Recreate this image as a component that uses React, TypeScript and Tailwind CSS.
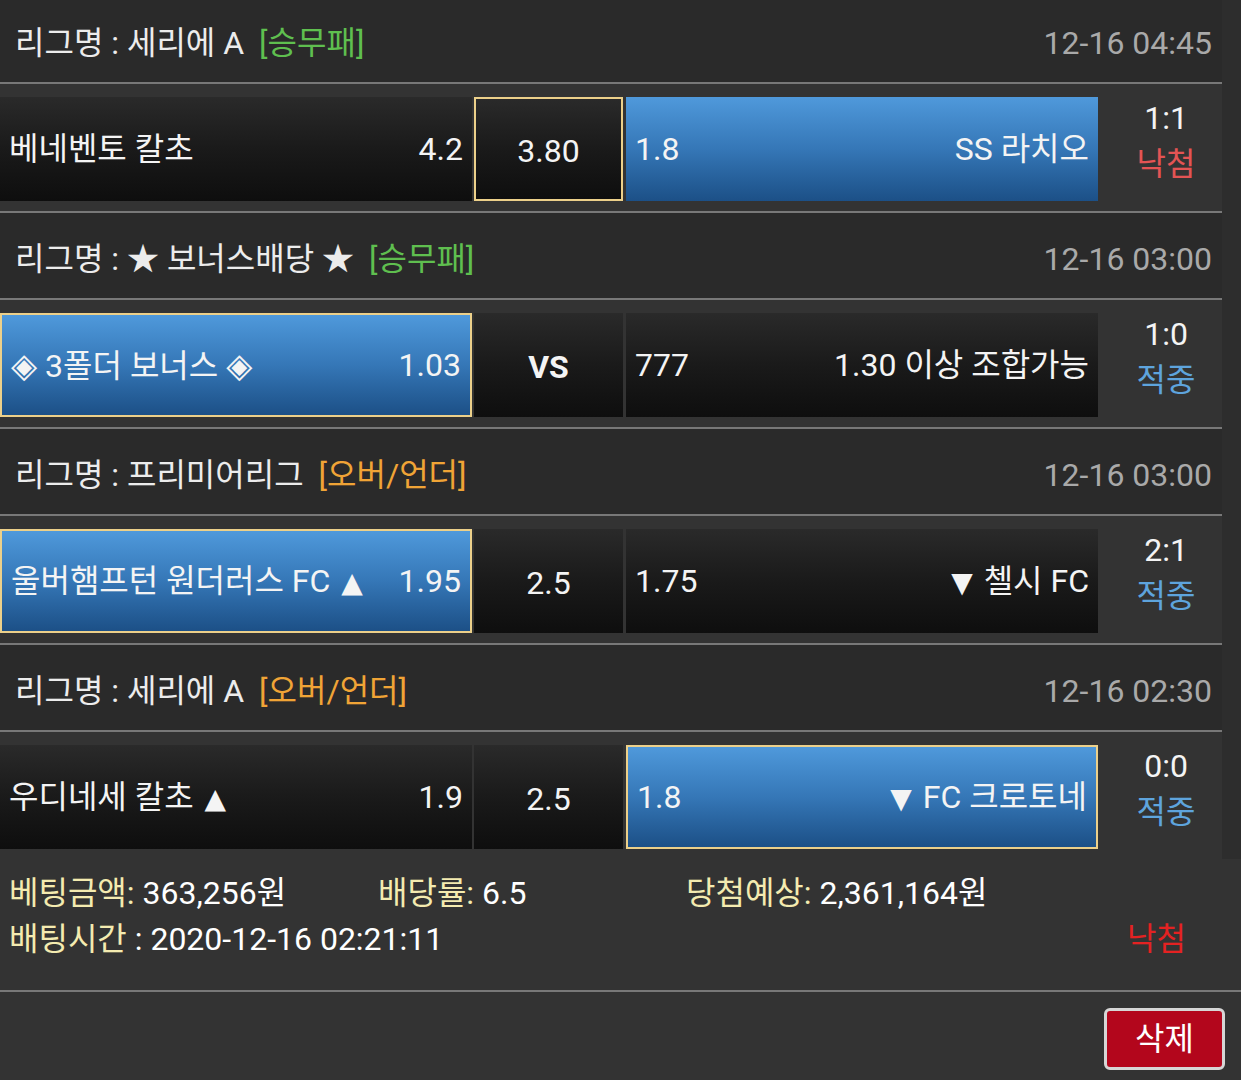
import React from "react";

type Cell = { left: string; right?: string; blue?: boolean; gold?: boolean; bold?: boolean };

type Match = {
    league: string;
    type: string;
    typeColor: "green" | "orange";
    time: string;
    home: Cell;
    mid: Cell;
    away: Cell;
    score: string;
    result: "낙첨" | "적중";
};

const matches: Match[] = [
    {
        league: "세리에 A", type: "승무패", typeColor: "green", time: "12-16 04:45",
        home: { left: "베네벤토 칼초", right: "4.2" },
        mid: { left: "3.80", gold: true },
        away: { left: "1.8", right: "SS 라치오", blue: true },
        score: "1:1", result: "낙첨",
    },
    {
        league: "★ 보너스배당 ★", type: "승무패", typeColor: "green", time: "12-16 03:00",
        home: { left: "◈ 3폴더 보너스 ◈", right: "1.03", blue: true, gold: true },
        mid: { left: "VS", bold: true },
        away: { left: "777", right: "1.30 이상 조합가능" },
        score: "1:0", result: "적중",
    },
    {
        league: "프리미어리그", type: "오버/언더", typeColor: "orange", time: "12-16 03:00",
        home: { left: "울버햄프턴 원더러스 FC ▲", right: "1.95", blue: true, gold: true },
        mid: { left: "2.5" },
        away: { left: "1.75", right: "▼ 첼시 FC" },
        score: "2:1", result: "적중",
    },
    {
        league: "세리에 A", type: "오버/언더", typeColor: "orange", time: "12-16 02:30",
        home: { left: "우디네세 칼초 ▲", right: "1.9" },
        mid: { left: "2.5" },
        away: { left: "1.8", right: "▼ FC 크로토네", blue: true, gold: true },
        score: "0:0", result: "적중",
    },
];

// arrows and diamonds come out a different size than the text around them
function Label({ text }: { text: string }) {
    const parts = text.split(/([▲▼◈])/);
    return (
        <>
            {parts.map((p, i) => {
                if (p === "▲" || p === "▼")
                    return <span key={i} className="text-[28px] mx-[3px]" style={{ fontFamily: "'DejaVu Sans', sans-serif" }}>{p}</span>;
                if (p === "◈")
                    return <span key={i} className="text-[34px]" style={{ fontFamily: "'DejaVu Sans', sans-serif" }}>{p}</span>;
                return <React.Fragment key={i}>{p}</React.Fragment>;
            })}
        </>
    );
}

function OddsCell({ cell, width, center }: { cell: Cell; width: string; center?: boolean }) {
    const bg = cell.blue
        ? "bg-linear-to-b from-[#4f99db] via-[#3577b7] to-[#1c5087]"
        : "bg-linear-to-b from-[#2a2a2a] via-[#1a1a1a] to-[#0e0e0e]";
    const border = cell.gold ? "border-2 border-[#ecd08a]" : "";
    return (
        <div className={`${width} h-[104px] flex items-center ${center ? "justify-center" : "justify-between px-[9px]"} ${bg} ${border} text-[#f4f4f4]`}>
            <span className={`${cell.bold ? "font-bold" : ""} ${center ? "pt-[3px]" : ""}`}><Label text={cell.left} /></span>
            {cell.right && <span><Label text={cell.right} /></span>}
        </div>
    );
}

export default function App() {
    return (
        <div
            className="w-[1241px] h-[1080px] bg-[#333333] overflow-hidden text-[32px] leading-none"
            style={{ fontFamily: "Roboto, 'Noto Sans CJK KR', sans-serif" }}
        >
            {/* bet list */}
            <div className="flex bg-[#2d2d2d]">
                <div className="w-[1222px] flex flex-col -mt-[3px]">
                    {matches.map((m, i) => (
                        <div key={i} className="flex flex-col">
                            {/* league header */}
                            <div className="h-[85px] bg-[#2a2a2a] flex items-center justify-between pl-[15px] pr-[10px] pt-[6px]">
                                <div className="flex items-center gap-[15px] text-[#ececec]">
                                    <span>리그명 : {m.league}</span>
                                    <span className={m.typeColor === "green" ? "text-[#5fbf4f]" : "text-[#f0a436]"}>[{m.type}]</span>
                                </div>
                                <span className="text-[#a9a9a9]">{m.time}</span>
                            </div>
                            <div className="h-[2px] bg-[#787878]" />

                            {/* match row */}
                            <div className="bg-[#333333] pt-[13px] pb-[10px] flex items-stretch">
                                <OddsCell cell={m.home} width="w-[472px]" />
                                <div className="w-[2px]" />
                                <OddsCell cell={m.mid} width="w-[149px]" center />
                                <div className="w-[3px]" />
                                <OddsCell cell={m.away} width="w-[472px]" />
                                <div className="flex-1 flex flex-col items-center pl-[12px] pt-[5px] gap-[14px]">
                                    <span className="text-[#f4f4f4]">{m.score}</span>
                                    <span className={m.result === "낙첨" ? "text-[#e45454]" : "text-[#5ea4dd]"}>{m.result}</span>
                                </div>
                            </div>
                            {i < matches.length - 1 && <div className="h-[2px] bg-[#787878]" />}
                        </div>
                    ))}
                </div>
                <div className="flex-1" />
            </div>

            {/* summary */}
            <div className="h-[131px] flex flex-col pl-[9px] pt-[18px] gap-[14px]">
                <div className="flex">
                    <div className="w-[369px]">
                        <span className="text-[#f4ebb0]">베팅금액: </span>
                        <span className="text-white">363,256원</span>
                    </div>
                    <div className="w-[308px]">
                        <span className="text-[#f4ebb0]">배당률: </span>
                        <span className="text-white">6.5</span>
                    </div>
                    <div>
                        <span className="text-[#f4ebb0]">당첨예상: </span>
                        <span className="text-white">2,361,164원</span>
                    </div>
                </div>
                <div className="flex justify-between pr-[55px]">
                    <div>
                        <span className="text-[#f4ebb0]">배팅시간</span>
                        <span className="text-white"> : 2020-12-16 02:21:11</span>
                    </div>
                    <span className="text-[#e42222]">낙첨</span>
                </div>
            </div>
            <div className="h-[2px] bg-[#787878]" />

            <div className="flex justify-end pt-[16px] pr-[16px]">
                <button className="w-[121px] h-[62px] rounded-[6px] border-[3px] border-[#d6d6d6] bg-[#b3061c] text-white text-[32px] leading-none flex items-center justify-center">
                    삭제
                </button>
            </div>
        </div>
    );
}
